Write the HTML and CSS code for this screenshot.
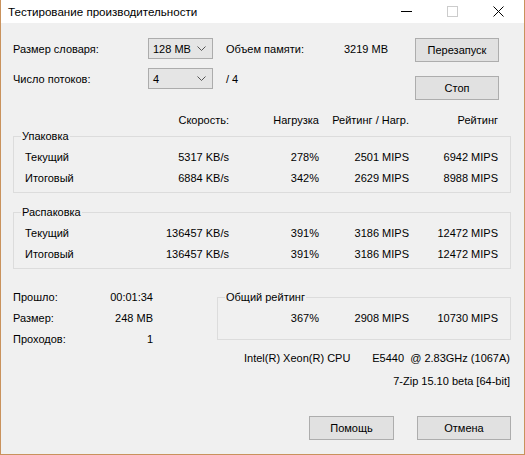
FILE: index.html
```html
<!DOCTYPE html>
<html lang="ru">
<head>
    <meta charset="UTF-8">
    <meta name="viewport" content="width=device-width, initial-scale=1.0">
    <title>Тестирование производительности</title>
    <link rel="stylesheet" href="styles.css">
</head>
<body>
<div class="window">
    <div class="titlebar">
        <span class="title">Тестирование производительности</span>
        <div class="controls">
            <span class="ctl"><svg width="11" height="11" viewBox="0 0 11 11"><line x1="0" y1="5.5" x2="11" y2="5.5" stroke="#000" stroke-width="1"/></svg></span>
            <span class="ctl"><svg width="11" height="11" viewBox="0 0 11 11"><rect x="0.5" y="0.5" width="10" height="10" fill="none" stroke="#cccccc"/></svg></span>
            <span class="ctl"><svg width="11" height="11" viewBox="0 0 11 11"><path d="M0.5 0.5L10.5 10.5M10.5 0.5L0.5 10.5" stroke="#000" stroke-width="1"/></svg></span>
        </div>
    </div>

    <div class="content">
        <!-- словарь / потоки + кнопки -->
        <div class="top">
            <div class="settings">
                <span>Размер словаря:</span>
                <div class="combo"><span>128 MB</span><svg width="9" height="5" viewBox="0 0 9 5"><polyline points="0.5,0.5 4.5,4.5 8.5,0.5" fill="none" stroke="#555"/></svg></div>
                <span class="mem">Объем памяти:</span>
                <span class="num">3219 MB</span>

                <span>Число потоков:</span>
                <div class="combo"><span>4</span><svg width="9" height="5" viewBox="0 0 9 5"><polyline points="0.5,0.5 4.5,4.5 8.5,0.5" fill="none" stroke="#555"/></svg></div>
                <span class="mem">/ 4</span>
                <span></span>
            </div>
            <div class="side-buttons">
                <button class="btn">Перезапуск</button>
                <button class="btn">Стоп</button>
            </div>
        </div>

        <div class="cols head">
            <span></span>
            <span>Скорость:</span>
            <span>Нагрузка</span>
            <span>Рейтинг / Нагр.</span>
            <span>Рейтинг</span>
        </div>

        <fieldset class="group">
            <legend>Упаковка</legend>
            <div class="cols row">
                <span class="name">Текущий</span>
                <span>5317 KB/s</span>
                <span>278%</span>
                <span>2501 MIPS</span>
                <span>6942 MIPS</span>
            </div>
            <div class="cols row">
                <span class="name">Итоговый</span>
                <span>6884 KB/s</span>
                <span>342%</span>
                <span>2629 MIPS</span>
                <span>8988 MIPS</span>
            </div>
        </fieldset>

        <fieldset class="group unpack">
            <legend>Распаковка</legend>
            <div class="cols row">
                <span class="name">Текущий</span>
                <span>136457 KB/s</span>
                <span>391%</span>
                <span>3186 MIPS</span>
                <span>12472 MIPS</span>
            </div>
            <div class="cols row">
                <span class="name">Итоговый</span>
                <span>136457 KB/s</span>
                <span>391%</span>
                <span>3186 MIPS</span>
                <span>12472 MIPS</span>
            </div>
        </fieldset>

        <div class="bottom">
            <div class="stats">
                <span>Прошло:</span><span class="num">00:01:34</span>
                <span>Размер:</span><span class="num">248 MB</span>
                <span>Проходов:</span><span class="num">1</span>
            </div>
            <div class="summary">
                <fieldset class="group total">
                    <legend>Общий рейтинг</legend>
                    <div class="total-row">
                        <span>367%</span>
                        <span>2908 MIPS</span>
                        <span>10730 MIPS</span>
                    </div>
                </fieldset>
                <div class="cpu">
                    <span>Intel(R) Xeon(R) CPU</span>
                    <span>E5440  @ 2.83GHz (1067A)</span>
                </div>
                <div class="version">7-Zip 15.10 beta [64-bit]</div>
            </div>
        </div>

        <div class="footer">
            <button class="btn help">Помощь</button>
            <button class="btn cancel">Отмена</button>
        </div>
    </div>
</div>
</body>
</html>
```

FILE: styles.css
```css
* {
    box-sizing: border-box;
}
html, body {
    margin: 0;
    padding: 0;
    background: #f0f0f0;
}
.window {
    width: 525px;
    height: 455px;
    display: flex;
    flex-direction: column;
    background: #f0f0f0;
    border: 1px solid #c9925c;
    border-top: none;
    font-family: "Liberation Sans", Arial, sans-serif;
    font-size: 11px;
    line-height: 14px;
    color: #000;
}

/* заголовок окна */
.titlebar {
    height: 23px;
    background: #fff;
    display: flex;
    align-items: center;
    justify-content: space-between;
}
.title {
    padding-left: 7px;
    font-size: 11.6px;
    color: #000;
}
.controls {
    display: flex;
    margin-right: 3px;
    height: 100%;
}
.ctl {
    width: 46px;
    display: flex;
    align-items: center;
    justify-content: center;
}

.content {
    flex: 1;
    display: flex;
    flex-direction: column;
    padding: 15px 13px 14px 12px;
}

/* верхний блок */
.top {
    display: flex;
    align-items: flex-start;
}
.settings {
    width: 375px;
    display: grid;
    grid-template-columns: 135px 65px 1fr auto;
    grid-auto-rows: 21px;
    row-gap: 9px;
    align-items: center;
}
.mem {
    padding-left: 13px;
}
.num {
    text-align: right;
}
.combo {
    height: 21px;
    display: flex;
    align-items: center;
    justify-content: space-between;
    padding: 0 6px 0 4px;
    background: #e5e5e5;
    border: 1px solid #acacac;
}
.side-buttons {
    margin-left: 27px;
    display: flex;
    flex-direction: column;
    gap: 14px;
}
.btn {
    width: 84px;
    height: 24px;
    padding: 0;
    background: #e1e1e1;
    border: 1px solid #adadad;
    border-radius: 0;
    font-family: inherit;
    font-size: 11px;
    color: #000;
}

/* таблица */
.cols {
    display: grid;
    grid-template-columns: 110px 106px 90px 90px 89px;
    text-align: right;
}
.head {
    margin-top: 13px;
}
.group {
    margin: 2px 0 0;
    padding: 3px 0 4px;
    border: 1px solid #dcdcdc;
    min-width: 0;
}
.group legend {
    margin-left: 7px;
    padding: 0 1px;
    line-height: 14px;
}
.group .cols {
    grid-template-columns: 109px 106px 90px 90px 89px;
}
.row {
    height: 21px;
    align-items: center;
}
.name {
    text-align: left;
    padding-left: 11px;
}
.unpack {
    margin-top: 12px;
}

/* нижний блок */
.bottom {
    display: flex;
    margin-top: 14px;
}
.stats {
    width: 140px;
    display: grid;
    grid-template-columns: 1fr auto;
    grid-auto-rows: 21px;
    align-items: center;
    padding-top: 3px;
}
.summary {
    flex: 1;
    margin-left: 64px;
}
.group.total {
    margin-top: 7px;
    padding: 3px 0 11px;
}
.total-row {
    display: grid;
    grid-template-columns: 101px 90px 89px;
    height: 21px;
    align-items: center;
    text-align: right;
}
.cpu {
    display: flex;
    justify-content: space-between;
    margin-top: 11px;
    padding: 0 1px 0 27px;
    white-space: pre;
}
.version {
    margin-top: 9px;
    padding-right: 1px;
    text-align: right;
}

.footer {
    margin-top: auto;
    display: flex;
    justify-content: flex-end;
    gap: 23px;
}
.help {
    width: 85px;
}
.cancel {
    width: 94px;
}
```
